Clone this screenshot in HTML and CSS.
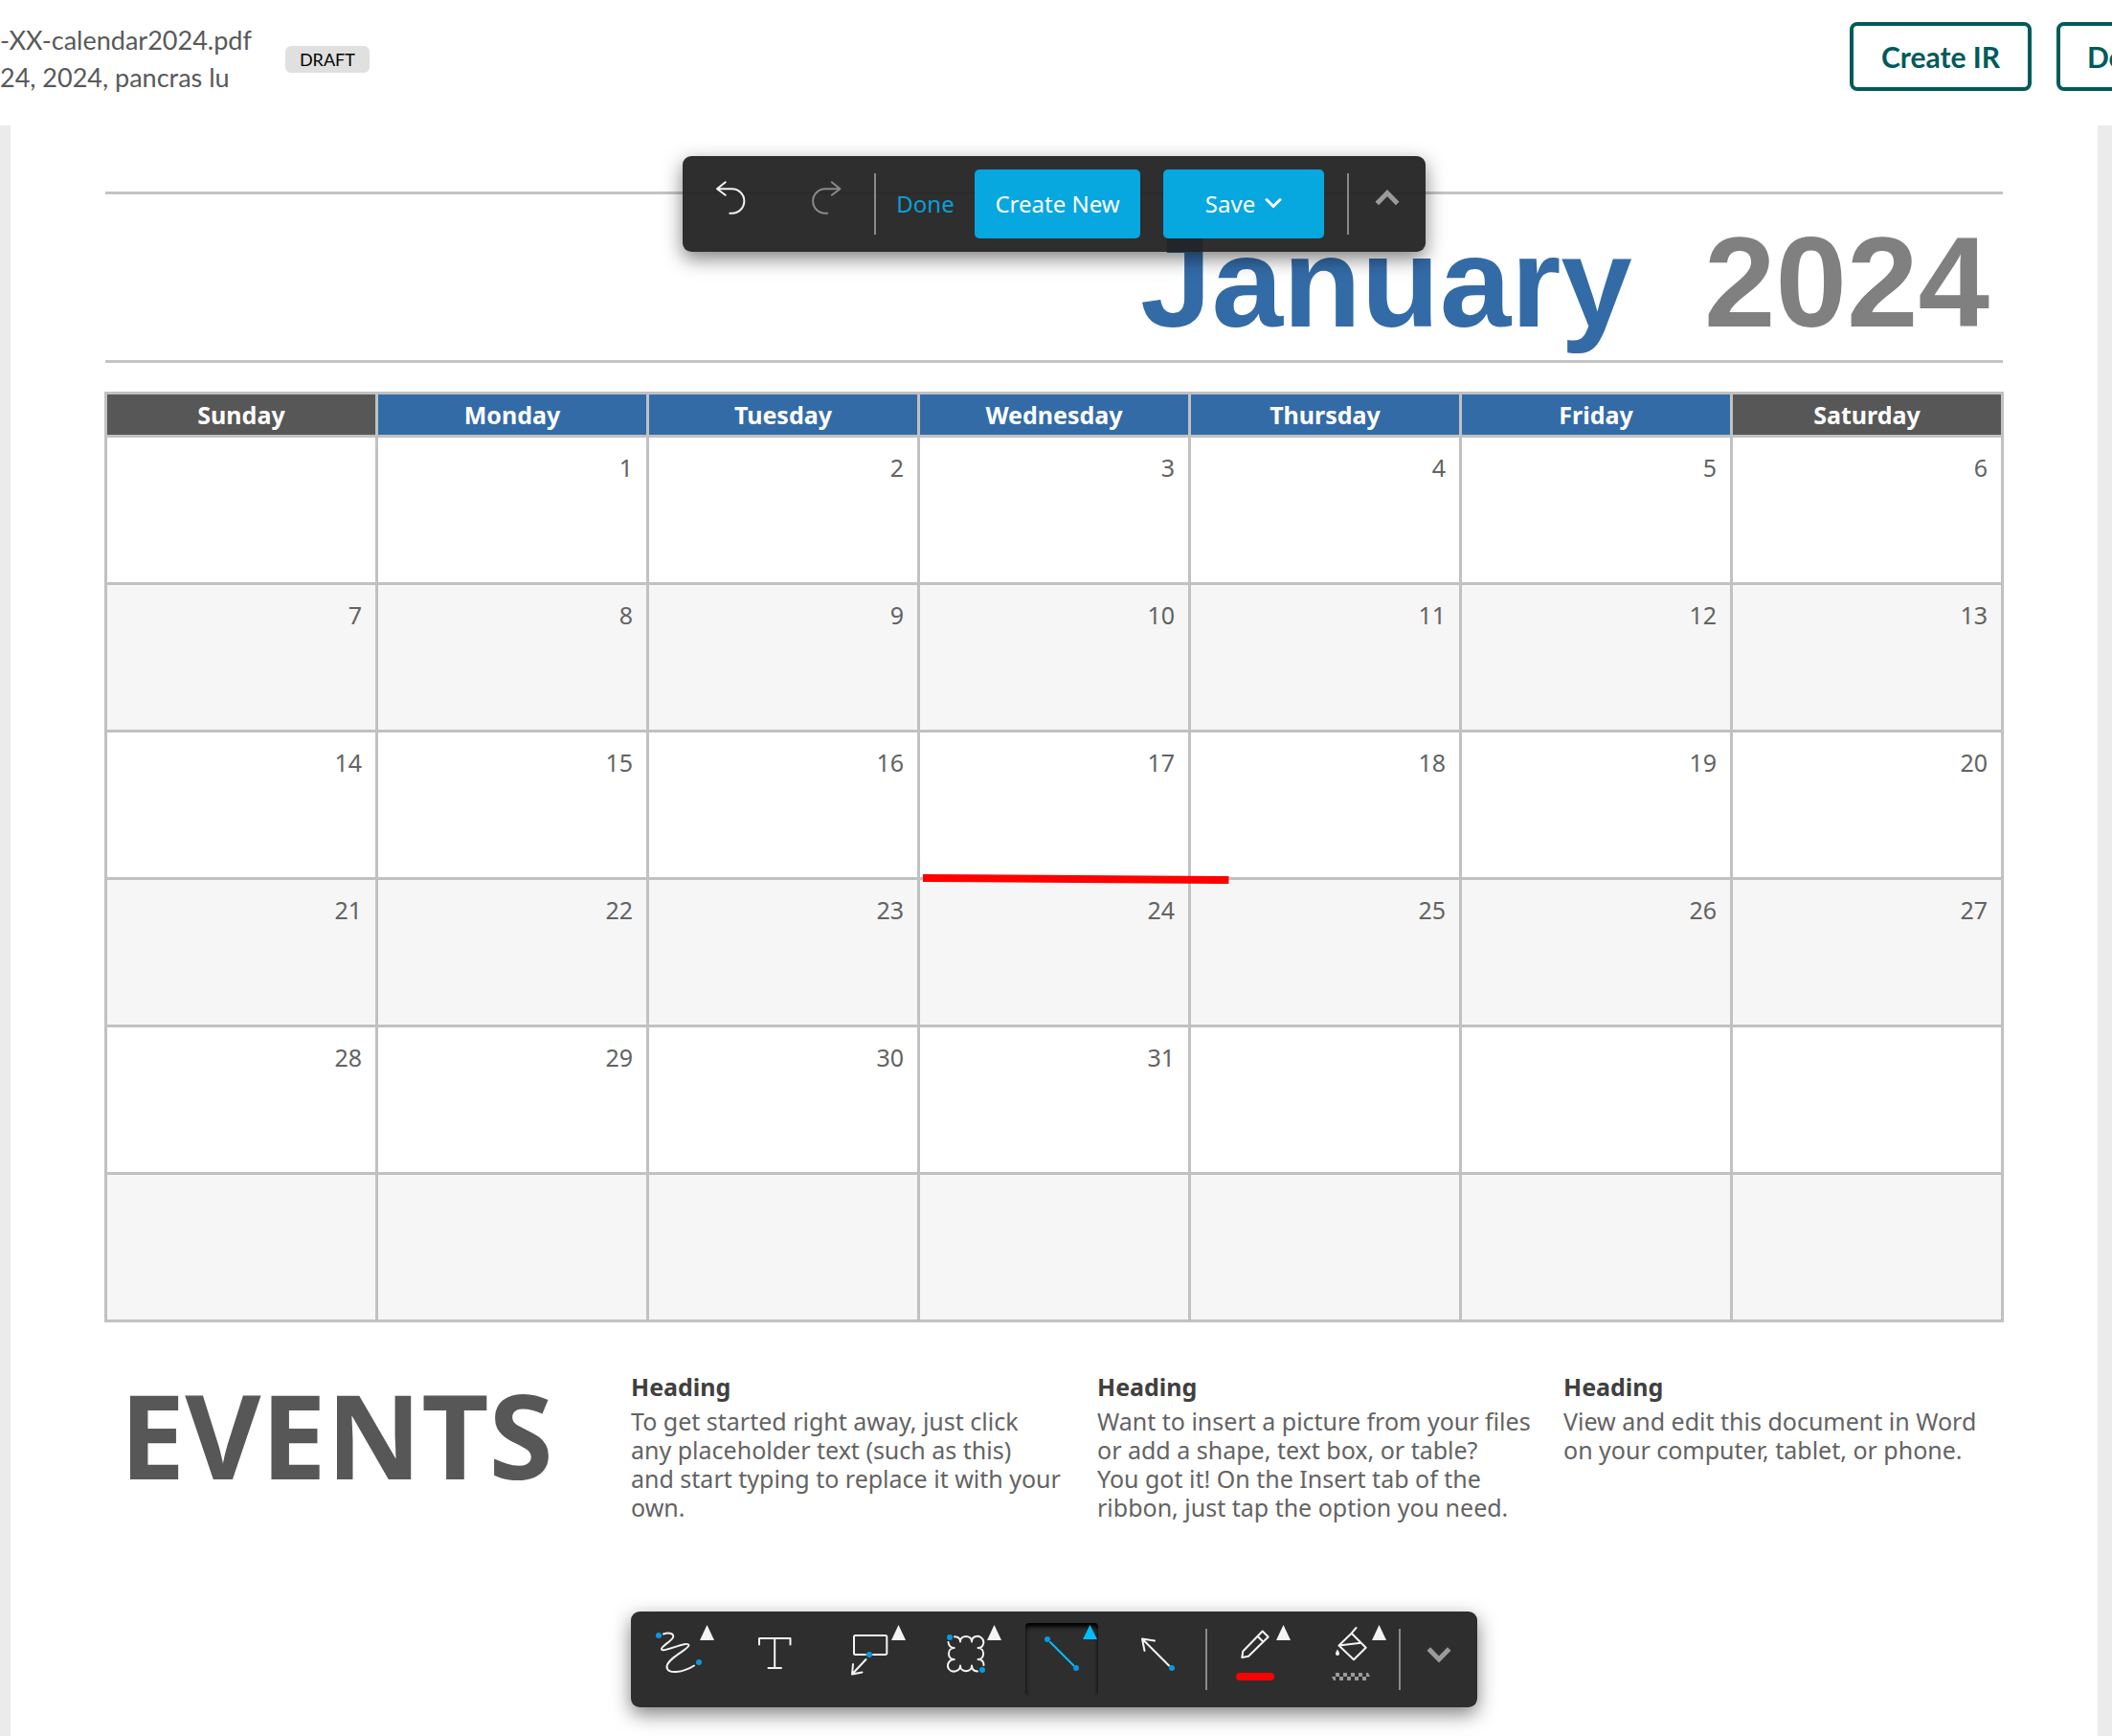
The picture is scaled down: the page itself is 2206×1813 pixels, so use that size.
FILE: index.html
```html
<!DOCTYPE html>
<html lang="en">
<head>
<meta charset="utf-8">
<title>Calendar markup</title>
<link rel="stylesheet" href="styles.css">
</head>
<body>
<header class="header">
  <div class="doc-info">
    <div>-XX-calendar2024.pdf</div>
    <div>24, 2024, pancras lu</div>
  </div>
  <span class="badge">DRAFT</span>
  <div class="header-actions">
    <button class="action" type="button">Create IR</button>
    <button class="action action-last" type="button">Do</button>
  </div>
</header>

<main class="viewer">
  <article class="paper">
    <h1 class="title"><span class="month">January</span><span class="year">2024</span></h1>
    <div class="calendar-wrap">
      <table class="calendar">
        <thead>
          <tr><th class="weekend">Sunday</th><th>Monday</th><th>Tuesday</th><th>Wednesday</th><th>Thursday</th><th>Friday</th><th class="weekend">Saturday</th></tr>
        </thead>
        <tbody>
          <tr><td></td><td>1</td><td>2</td><td>3</td><td>4</td><td>5</td><td>6</td></tr>
          <tr><td>7</td><td>8</td><td>9</td><td>10</td><td>11</td><td>12</td><td>13</td></tr>
          <tr><td>14</td><td>15</td><td>16</td><td>17</td><td>18</td><td>19</td><td>20</td></tr>
          <tr><td>21</td><td>22</td><td>23</td><td>24</td><td>25</td><td>26</td><td>27</td></tr>
          <tr><td>28</td><td>29</td><td>30</td><td>31</td><td></td><td></td><td></td></tr>
          <tr><td></td><td></td><td></td><td></td><td></td><td></td><td></td></tr>
        </tbody>
      </table>
      <svg class="markup" viewBox="0 0 318 12" preserveAspectRatio="none" aria-hidden="true"><path d="M0 5L318 7" stroke="#f00" stroke-width="8"/></svg>
    </div>
    <section class="events">
      <h2 class="events-title">EVENTS</h2>
      <div>
        <h3>Heading</h3>
        <p>To get started right away, just click<br>any placeholder text (such as this)<br>and start typing to replace it with your<br>own.</p>
      </div>
      <div>
        <h3>Heading</h3>
        <p>Want to insert a picture from your files<br>or add a shape, text box, or table?<br>You got it! On the Insert tab of the<br>ribbon, just tap the option you need.</p>
      </div>
      <div>
        <h3>Heading</h3>
        <p>View and edit this document in Word<br>on your computer, tablet, or phone.</p>
      </div>
    </section>

    <div class="overlay">
      <div class="toolbar" role="toolbar" aria-label="Document">
        <button class="tool" type="button" aria-label="Undo">
          <svg viewBox="0 0 76 76"><path class="ln" d="M32.7 15.3L24 22.3L32.7 28.7M24 22.3H39.6A12.7 12.7 0 0 1 39.6 47.8H37.3"/></svg>
        </button>
        <button class="tool dim" type="button" aria-label="Redo">
          <svg viewBox="0 0 76 76"><path class="ln" d="M43.8 15.3L52.5 22.3L43.8 28.7M52.5 22.3H36.9A12.7 12.7 0 0 0 36.9 47.8H39.2"/></svg>
        </button>
        <span class="sep"></span>
        <button class="done" type="button">Done</button>
        <button class="primary" type="button">Create New</button>
        <button class="primary save" type="button">Save
          <svg width="18" height="12" viewBox="0 0 18 12"><path d="M2 2.500L9 9.500L16 2.500" fill="none" stroke="#fff" stroke-width="3" stroke-linecap="round" stroke-linejoin="round"/></svg>
        </button>
        <span class="sep"></span>
        <button class="tool narrow" type="button" aria-label="Collapse">
          <svg viewBox="0 0 56 76"><path class="chev" d="M17.300 37.500L28 26.500L38.700 37.500"/></svg>
        </button>
      </div>

      <div class="toolbar" role="toolbar" aria-label="Markup tools">
        <button class="tool" type="button" aria-label="Freehand">
          <svg viewBox="0 0 76 76"><path class="ln" d="M22 11.500C28 9.500 33.500 11 32 15C30.500 19 18.500 25 20 27.500C22 31.500 47 18 48.500 23C49.500 27 26 36.500 25.500 45.500C25.500 54.500 43 51.500 54 44.500"/><circle class="dot" cx="17" cy="13" r="3"/><circle class="dot" cx="59" cy="41" r="3"/><path class="tri" d="M67.500 2L75 18H60Z"/></svg>
        </button>
        <button class="tool" type="button" aria-label="Text">
          <svg viewBox="0 0 76 76"><path class="ln" d="M22 22.500V16H54.500V22.500M38.200 16V47M31.500 47H45"/></svg>
        </button>
        <button class="tool" type="button" aria-label="Callout">
          <svg viewBox="0 0 76 76"><path class="ln" d="M33 33H22.500A1.500 1.500 0 0 1 21 31.500V14.500A1.500 1.500 0 0 1 22.500 13H53.800A1.500 1.500 0 0 1 55.300 14.500V31.500A1.500 1.500 0 0 1 53.800 33H41M33.500 38L19 53.500M20 43L19 53.500L29.500 51.500"/><circle class="dot" cx="37" cy="33" r="3"/><path class="tri" d="M67.500 2L75 18H60Z"/></svg>
        </button>
        <button class="tool" type="button" aria-label="Cloud">
          <svg viewBox="0 0 76 76"><path class="ln" d="M26 14.300C30 14.500 32 16.500 32 19.500C32 12 44 12 44 19.500C44 14 50 12.500 53.500 15C58 18 57 26 50.500 26C58 26 58 38 50.500 38C54 38 56.500 40 56.500 44M19.500 20C20 24 22 26 25.800 26C18 26 18 38 25.800 38C20 38 17.500 44 20 48C24 53 32 50 32 44.500C32 52 44 52 44 44.500C44 48 46 50.200 50 50.500"/><circle class="dot" cx="21" cy="15" r="3"/><circle class="dot" cx="55" cy="49" r="3"/><path class="tri" d="M67.500 2L75 18H60Z"/></svg>
        </button>
        <button class="tool active" type="button" aria-label="Line" aria-pressed="true">
          <svg viewBox="0 0 76 76"><path class="ln" d="M26 20L50.500 44.500"/><circle class="dot" cx="23" cy="17" r="3"/><circle class="dot" cx="53" cy="47" r="3"/><path class="tri" d="M67.500 2L75 17H60Z"/></svg>
        </button>
        <button class="tool" type="button" aria-label="Arrow">
          <svg viewBox="0 0 76 76"><path class="ln" d="M22 16.500L50 44.500M35 18.500L22 16.500L24.500 29"/><circle class="dot" cx="53" cy="47" r="3"/></svg>
        </button>
        <span class="sep"></span>
        <button class="tool" type="button" aria-label="Stroke color">
          <svg viewBox="0 0 76 76"><path class="ln" d="M24.300 36L25.300 29.500L45.700 8.500L51.700 14.500L31 34.700ZM40.500 13.700L46.500 19.700"/><rect x="18" y="52" width="40" height="8" rx="4" fill="#f00"/><path class="tri" d="M67.500 2L75 18H60Z"/></svg>
        </button>
        <button class="tool" type="button" aria-label="Fill color">
          <svg viewBox="0 0 76 76"><path class="ln" d="M43.500 5L38.700 10.700L25.500 23.500L41 38.300L53.700 25.700L38.700 10.700M25.500 23.500L48.500 20.700"/><path class="tri" d="M24 27.500C25 29 26 30.500 26 32A2 2 0 0 1 22 32C22 30.500 23 29 24 27.500Z"/><path fill="#9b9b9b" d="M18 56H22V60H20ZM22 52h4v4h-4zM26 56h4v4h-4zM30 52h4v4h-4zM34 56h4v4h-4zM38 52h4v4h-4zM42 56h4v4h-4zM46 52h4v4h-4zM50 56h4v4h-4zM54 52h2L58 56H54Z"/><path class="tri" d="M67.500 2L75 18H60Z"/></svg>
        </button>
        <span class="sep"></span>
        <button class="tool narrow" type="button" aria-label="Hide tools">
          <svg viewBox="0 0 56 76"><path class="chev" d="M17.300 27L28 38L38.700 27"/></svg>
        </button>
      </div>
    </div>
  </article>
</main>
</body>
</html>
```
FILE: styles.css
```css
* {
  box-sizing: border-box;
}

body {
  margin: 0;
  min-height: 100vh;
  display: flex;
  flex-direction: column;
  overflow-x: hidden;
  background: #fff;
  font-family: "Noto Sans", sans-serif;
}

button {
  margin: 0;
  padding: 0;
  border: 0;
  background: none;
  font: inherit;
}

/* Header */
.header {
  display: flex;
  align-items: flex-start;
  min-height: 131px;
  padding-top: 22px;
  overflow: hidden;
  font-family: Lato, sans-serif;
}

.doc-info {
  font-size: 27px;
  line-height: 39px;
  color: #58595b;
  white-space: nowrap;
}

.badge {
  margin: 26px 0 0 35px;
  padding: 0 15px;
  border-radius: 6px;
  background: #e0e0e0;
  color: #000;
  font-size: 18px;
  line-height: 28px;
}

.header-actions {
  display: flex;
  gap: 26px;
  margin-left: auto;
  margin-right: -132px;
}

.action {
  width: 190px;
  height: 72px;
  margin-top: 1px;
  border: 4px solid #005a5a;
  border-radius: 8px;
  background: #fff;
  color: #005a5a;
  font-size: 30px;
  font-weight: 700;
}

.action-last {
  padding-left: 28px;
  text-align: left;
}

/* Document page */
.viewer {
  flex: 1;
  display: flex;
  padding: 0 15px 0 11px;
  background: #ebebeb;
}

.paper {
  position: relative;
  flex: 1;
  padding: 69px 99px 200px;
  background: #fff;
}

.title {
  display: flex;
  justify-content: flex-end;
  gap: 75px;
  margin: 0 0 30px;
  padding: 10px 14px 0 0;
  border-top: 3px solid #c4c4c4;
  border-bottom: 3px solid #c4c4c4;
  font-family: "Liberation Sans", sans-serif;
  font-size: 134px;
  line-height: 163px;
}

.month {
  color: #336ba7;
}

.year {
  color: #808080;
}

.calendar-wrap {
  position: relative;
  margin: 0 -1px;
}

.calendar {
  width: 100%;
  table-layout: fixed;
  border-collapse: collapse;
  font-size: 25px;
  line-height: 30px;
}

.calendar th,
.calendar td {
  border: 3px solid #c1c1c1;
}

.calendar th {
  height: 45px;
  padding: 0;
  background: #336ba7;
  color: #fff;
}

.calendar .weekend {
  background: #575757;
}

.calendar td {
  height: 154px;
  padding: 16px 14px 0 0;
  text-align: right;
  vertical-align: top;
  color: #636363;
}

.calendar tbody tr:nth-child(even) {
  background: #f6f6f6;
}

.markup {
  position: absolute;
  left: 43.1%;
  top: 503px;
  width: 16.1%;
  height: 12px;
}

/* Events */
.events {
  display: grid;
  grid-template-columns: 549fr 487fr 487fr 459fr;
  margin-top: 52px;
  font-size: 25px;
  line-height: 30px;
  color: #636363;
  white-space: nowrap;
}

.events-title {
  margin: 0;
  padding-left: 15px;
  font-size: 122px;
  line-height: 130px;
  color: #575757;
}

.events h3 {
  margin: 0 0 6px;
  font-size: 25px;
  color: #404040;
}

.events p {
  margin: 0;
}

/* Floating toolbars */
.overlay {
  position: absolute;
  inset: 0;
  display: flex;
  flex-direction: column;
  justify-content: space-between;
  align-items: center;
  padding: 32px 0 30px;
}

.toolbar {
  display: flex;
  align-items: center;
  height: 100px;
  border-radius: 9px;
  background: rgba(33, 33, 33, 0.94);
  box-shadow: 0 7px 20px rgba(0, 0, 0, 0.5);
  font-size: 24px;
}

.tool {
  width: 76px;
  height: 76px;
  margin: 0 12px;
  border-radius: 4px;
  color: #f4f4f4;
}

.tool svg {
  display: block;
  width: 100%;
  height: 76px;
}

.tool.narrow {
  width: 56px;
}

.tool.dim {
  color: #8a8a8a;
}

.tool.active {
  color: #00bfff;
  box-shadow: inset 0 4px 4px #000;
}

.ln {
  fill: none;
  stroke: currentColor;
  stroke-width: 2;
  stroke-linecap: round;
  stroke-linejoin: round;
}

.tri {
  fill: currentColor;
}

.dot {
  fill: #0a98e6;
}

.chev {
  fill: none;
  stroke: #9b9b9b;
  stroke-width: 5;
}

.sep {
  width: 2px;
  height: 64px;
  background: #8a8a8a;
}

.done {
  width: 79px;
  margin-left: 12px;
  padding-bottom: 2px;
  color: #0a9fd8;
}

.primary {
  display: flex;
  align-items: center;
  justify-content: center;
  gap: 10px;
  width: 173px;
  height: 72px;
  margin: 0 12px;
  padding-bottom: 2px;
  border-radius: 5px;
  background: #07a7e0;
  color: #fff;
}

.save {
  width: 168px;
  margin-right: 24px;
}
```
